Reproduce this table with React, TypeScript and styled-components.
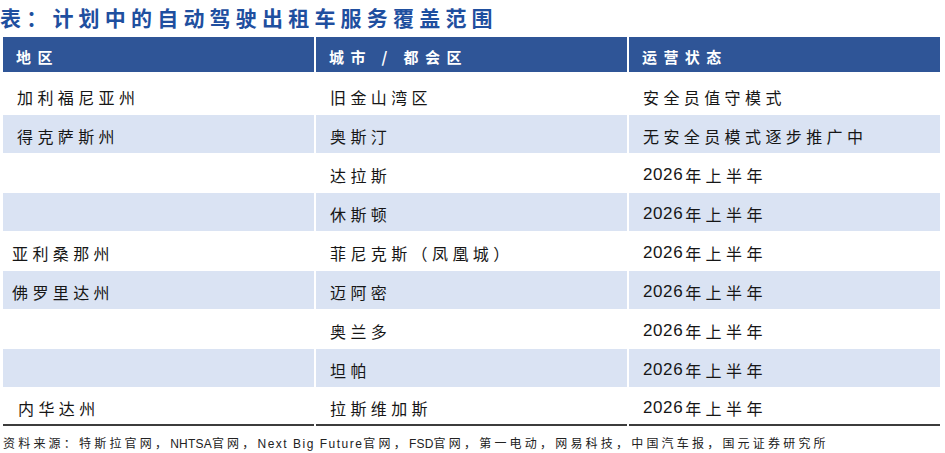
import styled, { createGlobalStyle } from 'styled-components';

const GlobalStyle = createGlobalStyle`
    html, body {
        margin: 0;
        padding: 0;
        background: #ffffff;
    }
    body {
        font-family: "Noto Sans CJK SC", "Liberation Sans", sans-serif;
    }
`;

const Page = styled.div`
    width: 945px;
    height: 453px;
    padding: 0 0 0 3px;
    box-sizing: border-box;
    overflow: hidden;
`;

const Title = styled.h1`
    margin: 0;
    padding-top: 1px;
    margin-left: -3px;
    height: 36px;
    line-height: 32px;
    font-size: 21px;
    font-weight: 700;
    letter-spacing: 5.2px;
    color: #1f4f9f;
    white-space: nowrap;
`;

const Table = styled.div`
    display: grid;
    grid-template-columns: 311px 311px 311px;
    grid-auto-rows: 38px;
    column-gap: 2px;
    row-gap: 1px;
    width: 937px;
`;

const HeadCell = styled.div`
    height: 35px;
    background: #2f5597;
    color: #ffffff;
    font-size: 15px;
    font-weight: 700;
    letter-spacing: 6.4px;
    display: flex;
    align-items: center;
    padding: 3px 0 0 13px;
    box-sizing: border-box;
    white-space: nowrap;
`;

const Cell = styled.div<{ $striped: boolean; $last: boolean; $indent: number }>`
    background: ${(p) => (p.$striped ? '#dae3f3' : '#ffffff')};
    color: #161616;
    font-size: 16px;
    letter-spacing: 4.4px;
    display: flex;
    align-items: center;
    padding: 3px 0 0 ${(p) => p.$indent}px;
    box-sizing: border-box;
    white-space: nowrap;
    border-bottom: ${(p) => (p.$last ? '2px solid #3c3c3c' : 'none')};
`;

const Num = styled.span`
    font-family: "Liberation Sans", sans-serif;
    font-size: 17px;
    letter-spacing: 0.6px;
    margin-right: 2px;
`;

const Footer = styled.div`
    margin-top: 8px;
    height: 18px;
    line-height: 18px;
    font-size: 12px;
    letter-spacing: 3.2px;
    color: #222222;
    white-space: nowrap;
`;

const Latin = styled.span<{ $wide?: boolean }>`
    font-family: "Liberation Sans", sans-serif;
    font-size: 12px;
    letter-spacing: ${(p) => (p.$wide ? '1.5px' : '0.2px')};
`;

type Row = { region: string; indent: number; city: string; status: string };

const rows: Row[] = [
    { region: '加利福尼亚州', indent: 14, city: '旧金山湾区', status: '安全员值守模式' },
    { region: '得克萨斯州', indent: 14, city: '奥斯汀', status: '无安全员模式逐步推广中' },
    { region: '', indent: 14, city: '达拉斯', status: '2026年上半年' },
    { region: '', indent: 14, city: '休斯顿', status: '2026年上半年' },
    { region: '亚利桑那州', indent: 9, city: '菲尼克斯（凤凰城）', status: '2026年上半年' },
    { region: '佛罗里达州', indent: 9, city: '迈阿密', status: '2026年上半年' },
    { region: '', indent: 14, city: '奥兰多', status: '2026年上半年' },
    { region: '', indent: 14, city: '坦帕', status: '2026年上半年' },
    { region: '内华达州', indent: 15, city: '拉斯维加斯', status: '2026年上半年' },
];

function Status({ text }: { text: string }) {
    const m = text.match(/^(\d+)(.*)$/);
    if (!m) return <>{text}</>;
    return (
        <>
            <Num>{m[1]}</Num>
            {m[2]}
        </>
    );
}

export default function App() {
    return (
        <Page>
            <GlobalStyle />
            <Title>表：计划中的自动驾驶出租车服务覆盖范围</Title>
            <Table>
                <HeadCell>地区</HeadCell>
                <HeadCell>城市 / 都会区</HeadCell>
                <HeadCell>运营状态</HeadCell>
                {rows.map((r, i) => {
                    const striped = i % 2 === 1;
                    const last = i === rows.length - 1;
                    return [
                        <Cell key={`a${i}`} $striped={striped} $last={last} $indent={r.indent}>
                            {r.region}
                        </Cell>,
                        <Cell key={`b${i}`} $striped={striped} $last={last} $indent={14}>
                            {r.city}
                        </Cell>,
                        <Cell key={`c${i}`} $striped={striped} $last={last} $indent={14}>
                            <Status text={r.status} />
                        </Cell>,
                    ];
                })}
            </Table>
            <Footer>
                资料来源：特斯拉官网，<Latin>NHTSA</Latin>官网，<Latin $wide>Next Big Future</Latin>官网，<Latin>FSD</Latin>官网，第一电动，网易科技，中国汽车报，国元证券研究所
            </Footer>
        </Page>
    );
}
